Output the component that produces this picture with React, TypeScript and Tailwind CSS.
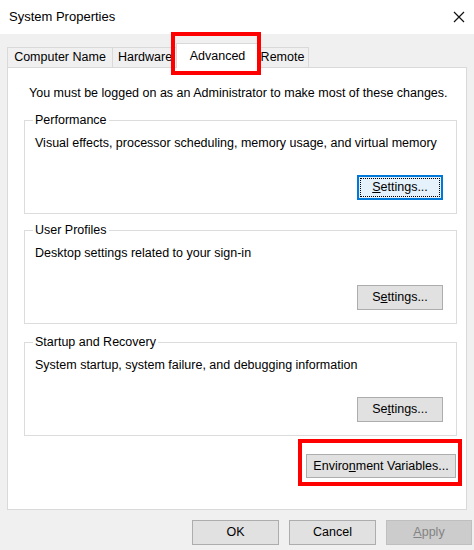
import React from "react";

const font = { fontFamily: '"Liberation Sans", Arial, sans-serif' };

function Btn({
  children,
  focused,
  disabled,
  className = "",
}: {
  children: React.ReactNode;
  focused?: boolean;
  disabled?: boolean;
  className?: string;
}) {
  const base = "relative flex items-center justify-center text-[12.5px] leading-none";
  if (disabled)
    return (
      <div className={`${base} bg-[#cccccc] border border-[#bfbfbf] text-[#838383] ${className}`}>{children}</div>
    );
  if (focused)
    return (
      <div className={`${base} bg-[#e5f1fb] border-2 border-[#0078d7] text-black ${className}`}>
        <div className="absolute inset-[1px] border border-dotted border-black" />
        {children}
      </div>
    );
  return <div className={`${base} bg-[#e1e1e1] border border-[#adadad] text-black ${className}`}>{children}</div>;
}

function Group({
  title,
  text,
  button,
  className = "",
}: {
  title: string;
  text: string;
  button: React.ReactNode;
  className?: string;
}) {
  return (
    <fieldset className={`border border-[#dcdcdc] ml-[16px] mr-[9px] px-[10px] pb-[13px] ${className}`}>
      <legend className="-ml-[2px] px-[2px] text-[12.5px] leading-[16px] text-black">{title}</legend>
      <div className="h-[72px] flex flex-col">
        <p className="mt-[7px] text-[12.5px] leading-[16px] text-black whitespace-nowrap">{text}</p>
        <div className="mt-auto flex justify-end pr-[3px]">{button}</div>
      </div>
    </fieldset>
  );
}

export default function App() {
  return (
    <div className="relative w-[474px] h-[550px] bg-[#f0f0f0] overflow-hidden" style={font}>
      {/* Title bar */}
      <div className="h-[34px] bg-white flex items-center justify-between pl-[9px] pr-[6px]">
        <span className="text-[13px] text-black">System Properties</span>
        <svg width="16" height="16" viewBox="0 0 16 16" className="mr-[1px]">
          <path d="M3 3 L13 13 M13 3 L3 13" stroke="#111" strokeWidth="1.2" />
        </svg>
      </div>

      {/* Tabs */}
      <div className="flex items-end h-[33px] pl-[7px]">
        <div className="h-[20px] w-[106px] border border-b-0 border-[#d9d9d9] bg-[#f0f0f0] flex items-center justify-center text-[12.5px] text-black">
          Computer Name
        </div>
        <div className="h-[20px] w-[65px] border border-l-0 border-b-0 border-[#d9d9d9] bg-[#f0f0f0] flex items-center justify-center text-[12.5px] text-black">
          Hardware
        </div>
        <div className="relative z-10 -ml-[2px] -mr-[2px] -mb-[1px] h-[25px] w-[83px] border border-b-0 border-[#d9d9d9] bg-white flex items-start pt-[3px] justify-center text-[12.5px] text-black">
          Advanced
        </div>
        <div className="h-[20px] w-[52px] border border-l-0 border-b-0 border-[#d9d9d9] bg-[#f0f0f0] flex items-center justify-center text-[12.5px] text-black">
          Remote
        </div>
      </div>

      {/* Panel */}
      <div className="mx-[7px] h-[443px] border border-[#d9d9d9] bg-white flex flex-col">
        <p className="mt-[17px] pl-[21px] text-[12.5px] leading-[16px] text-black whitespace-nowrap">
          You must be logged on as an Administrator to make most of these changes.
        </p>
        <Group
          className="mt-[11px]"
          title="Performance"
          text="Visual effects, processor scheduling, memory usage, and virtual memory"
          button={
            <Btn focused className="w-[86px] h-[25px]">
              <span>
                <u>S</u>ettings...
              </span>
            </Btn>
          }
        />
        <Group
          className="mt-[8px]"
          title="User Profiles"
          text="Desktop settings related to your sign-in"
          button={
            <Btn className="w-[86px] h-[25px]">
              <span>
                S<u>e</u>ttings...
              </span>
            </Btn>
          }
        />
        <Group
          className="mt-[10px]"
          title="Startup and Recovery"
          text="System startup, system failure, and debugging information"
          button={
            <Btn className="w-[86px] h-[25px]">
              <span>
                Se<u>t</u>tings...
              </span>
            </Btn>
          }
        />
        <div className="mt-[18px] flex justify-end pr-[10px]">
          <Btn className="w-[150px] h-[24px]">
            <span>
              Enviro<u>n</u>ment Variables...
            </span>
          </Btn>
        </div>
      </div>

      {/* Bottom buttons */}
      <div className="mt-[10px] flex justify-end gap-[10px] pr-[2px]">
        <Btn className="w-[87px] h-[25px]">OK</Btn>
        <Btn className="w-[87px] h-[25px]">Cancel</Btn>
        <Btn disabled className="w-[86px] h-[25px]">
          <span>
            <u>A</u>pply
          </span>
        </Btn>
      </div>

      {/* Red highlight boxes */}
      <div className="absolute left-[171px] top-[32px] w-[90px] h-[43px] border-[4px] border-[#ff0000] z-20" />
      <div className="absolute left-[298px] top-[439px] w-[164px] h-[47px] border-[4px] border-[#ff0000] z-20" />
    </div>
  );
}
